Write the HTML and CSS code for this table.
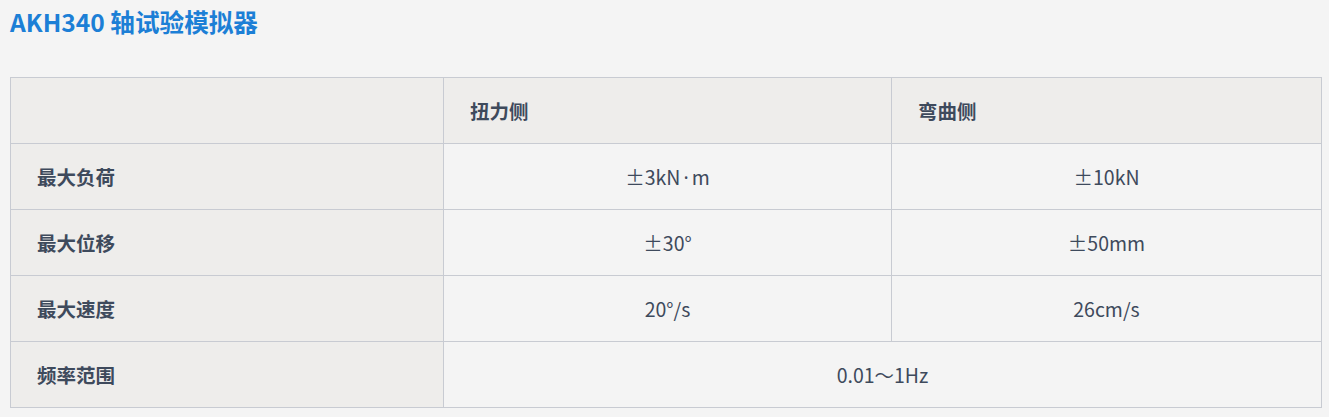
FILE: index.html
```html
<!DOCTYPE html>
<html lang="zh">
<head>
<meta charset="utf-8">
<link rel="stylesheet" href="styles.css">
</head>
<body>
<h2 class="title">AKH340 轴试验模拟器</h2>
<table class="spec">
  <colgroup>
    <col class="c1">
    <col class="c2">
    <col class="c3">
  </colgroup>
  <tr class="head">
    <th></th>
    <th>扭力侧</th>
    <th>弯曲侧</th>
  </tr>
  <tr>
    <th>最大负荷</th>
    <td>±3kN<span class="dot">·</span>m</td>
    <td>±10kN</td>
  </tr>
  <tr>
    <th>最大位移</th>
    <td>±30°</td>
    <td>±50mm</td>
  </tr>
  <tr>
    <th>最大速度</th>
    <td>20°/s</td>
    <td>26cm/s</td>
  </tr>
  <tr>
    <th>频率范围</th>
    <td colspan="2">0.01～1Hz</td>
  </tr>
</table>
</body>
</html>
```
FILE: styles.css
```css
html, body {
  margin: 0;
  padding: 0;
  background: #f4f4f4;
  font-family: "Noto Sans CJK SC", "Noto Sans", sans-serif;
  color: #3e4a5c;
}
.title {
  margin: 0;
  padding: 5px 0 0 10px;
  height: 32px;
  font-size: 24.6px;
  line-height: 32px;
  font-weight: 700;
  color: #1c7fd6;
}
.spec {
  margin: 40px 0 0 10px;
  width: 1311px;
  border-collapse: collapse;
  table-layout: fixed;
  font-size: 19.5px;
}
.c1 { width: 433px; }
.c2 { width: 448px; }
.c3 { width: 430px; }
.spec th, .spec td {
  border: 1px solid #c8cbd2;
  height: 65px;
  padding: 0;
}
.spec th {
  text-align: left;
  font-weight: 700;
  background: #eeedeb;
  padding-left: 26px;
}
.spec td {
  text-align: center;
  font-weight: 400;
  background: #f4f4f4;
}
.dot {
  font-family: "Noto Sans", sans-serif;
  margin: 0 3px;
}
```
